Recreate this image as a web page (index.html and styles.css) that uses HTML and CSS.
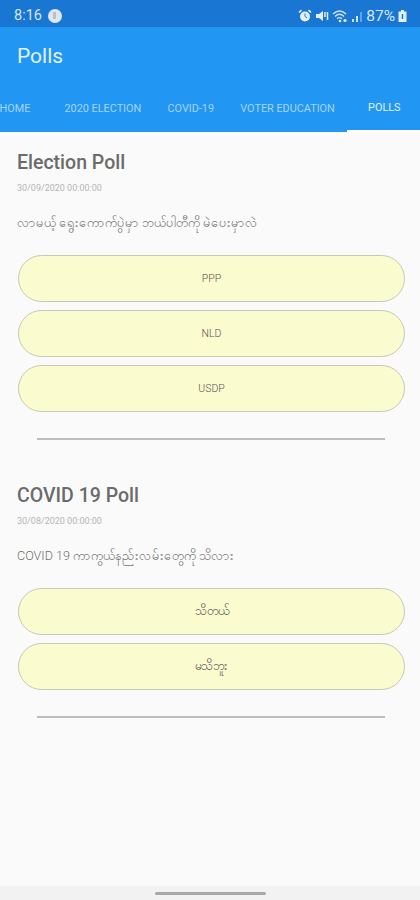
FILE: index.html
```html
<!doctype html>
<html lang="en">
	<head>
		<meta charset="utf-8">
		<title>Polls</title>
		<link rel="stylesheet" href="styles.css">
	</head>
	<body>
		<div class="status-bar">
			<div class="status-left">
				<span class="clock">8:16</span>
				<span class="notif-dot"><span class="notif-mark"></span></span>
			</div>
			<div class="status-right">
				<svg width="14" height="14" viewBox="0 0 14 14"><circle cx="7" cy="7.5" r="5" fill="#e3f0fb"/><path d="M1 3.5 3.5 1.2M13 3.5 10.500 1.200" stroke="#e3f0fb" stroke-width="1.600"/><path d="M7 4.500V7.500L9 9" stroke="#1976d2" fill="none"/></svg>
				<svg width="14" height="14" viewBox="0 0 14 14"><path d="M1 5H4L8 2V12L4 9H1Z" fill="#e3f0fb"/><path d="M10 3V8M12.500 3V11" stroke="#e3f0fb" stroke-width="1.500"/></svg>
				<svg width="16" height="14" viewBox="0 0 16 14"><path d="M1 5Q7.500 -1 14 5M3 7.500Q7.500 3 12 7.500M5 9.800Q7.500 7.500 10 9.800" stroke="#cfe3f6" stroke-width="1.300" fill="none"/><circle cx="13" cy="11.500" r="1.600" fill="#e3f0fb"/><circle cx="8" cy="12" r="1.300" fill="#e3f0fb"/></svg>
				<svg width="12" height="14" viewBox="0 0 12 14"><path d="M1 10H3V13H1ZM5 7H7V13H5Z" fill="#cfe3f6"/><path d="M9 3H11V13H9Z" fill="#5ba7e6"/></svg>
				<span class="battery-text">87%</span>
				<svg width="9" height="14" viewBox="0 0 9 14"><path d="M3 1H6V2.500H8.500V13H.5V2.500H3Z" fill="#e3f0fb"/><path d="M4.500 5V10" stroke="#1976d2" stroke-width="1.500"/></svg>
			</div>
		</div>

		<header class="app-bar">
			<h1 class="app-title">Polls</h1>
			<nav class="tabs">
				<a class="tab">HOME</a>
				<a class="tab">2020 ELECTION</a>
				<a class="tab">COVID-19</a>
				<a class="tab">VOTER EDUCATION</a>
				<a class="tab tab-active">POLLS</a>
			</nav>
		</header>

		<main class="content">
			<section class="poll">
				<h2 class="poll-title">Election Poll</h2>
				<p class="poll-date">30/09/2020 00:00:00</p>
				<p class="poll-question">လာမယ့် ရွေးကောက်ပွဲမှာ ဘယ်ပါတီကို မဲပေးမှာလဲ</p>
				<div class="options">
					<button class="option">PPP</button>
					<button class="option">NLD</button>
					<button class="option">USDP</button>
				</div>
				<hr class="divider">
			</section>

			<section class="poll">
				<h2 class="poll-title">COVID 19 Poll</h2>
				<p class="poll-date">30/08/2020 00:00:00</p>
				<p class="poll-question">COVID 19 ကာကွယ်နည်းလမ်းတွေကို သိလား</p>
				<div class="options">
					<button class="option option-mm">သိတယ်</button>
					<button class="option option-mm">မသိဘူး</button>
				</div>
				<hr class="divider">
			</section>
		</main>

		<div class="nav-bar">
			<span class="nav-handle"></span>
		</div>
	</body>
</html>
```

FILE: styles.css
```css
html, body {
	margin: 0;
	width: 100%;
	height: 100%;
}

body {
	display: flex;
	flex-direction: column;
	overflow: hidden;
	font-family: Roboto, "Noto Sans", sans-serif;
	background-color: #fafafa;
}

.status-bar {
	height: 27px;
	box-sizing: border-box;
	flex: none;
	display: flex;
	justify-content: space-between;
	align-items: center;
	padding: 4px 13px 0 14px;
	background-color: #1976d2;
	color: #d5e7f8;
}

.status-left, .status-right {
	display: flex;
	align-items: center;
}

.status-left {
	gap: 6px;
}

.status-right {
	gap: 3px;
}

.clock {
	font-size: 14.500px;
}

.battery-text {
	font-size: 15.500px;
}

.notif-dot {
	width: 14px;
	height: 14px;
	border-radius: 50%;
	background-color: #dfe7f5;
	display: flex;
	justify-content: center;
	align-items: center;
}

.notif-mark {
	width: 3px;
	height: 7px;
	background-color: #b9bfd0;
}

.app-bar {
	flex: none;
	height: 105px;
	display: flex;
	flex-direction: column;
	justify-content: space-between;
	background-color: #2196f3;
	overflow: hidden;
}

.app-title {
	margin: 17px 0 0 17px;
	font-size: 21px;
	font-weight: 400;
	color: #e3f2fd;
}

.tabs {
	display: flex;
	margin-left: -22px;
}

.tab {
	flex: none;
	min-width: 74px;
	box-sizing: border-box;
	height: 48px;
	padding: 0 12.500px;
	display: flex;
	justify-content: center;
	align-items: center;
	font-size: 10.850px;
	color: #a6d4fa;
}

.tab-active {
	color: #e3f2fd;
	border-bottom: 2px solid #fff;
}

.content {
	flex: 1;
	padding: 19px 15px 0 17px;
}

.poll {
	margin-bottom: 44px;
}

.poll-title {
	margin: 0;
	font-size: 19.500px;
	line-height: 24px;
	font-weight: 500;
	color: #6b6b6b;
}

.poll-date {
	margin: 8px 0 0;
	font-size: 9px;
	line-height: 10px;
	color: #b5b5b5;
}

.poll-question {
	margin: 21px 0 0;
	font-size: 12.600px;
	line-height: 18px;
	font-weight: 300;
	color: #707070;
}

.options {
	display: flex;
	flex-direction: column;
	gap: 8px;
	margin-top: 23px;
}

.option {
	height: 47px;
	margin-left: 1px;
	border: 1px solid #c8c8b4;
	border-radius: 24px;
	background-color: #fbfbd0;
	font: inherit;
	font-size: 10.500px;
	font-weight: 300;
	color: #555;
}

.option-mm {
	font-size: 12.300px;
}

.divider {
	margin: 26px 20px 0 20px;
	border: none;
	height: 2px;
	background-color: #bdbdbd;
}

.nav-bar {
	flex: none;
	height: 14px;
	display: flex;
	justify-content: center;
	align-items: center;
	background-color: #f2f2f2;
}

.nav-handle {
	width: 111px;
	height: 3px;
	background-color: #a9a9a9;
	border-radius: 2px;
}
```
